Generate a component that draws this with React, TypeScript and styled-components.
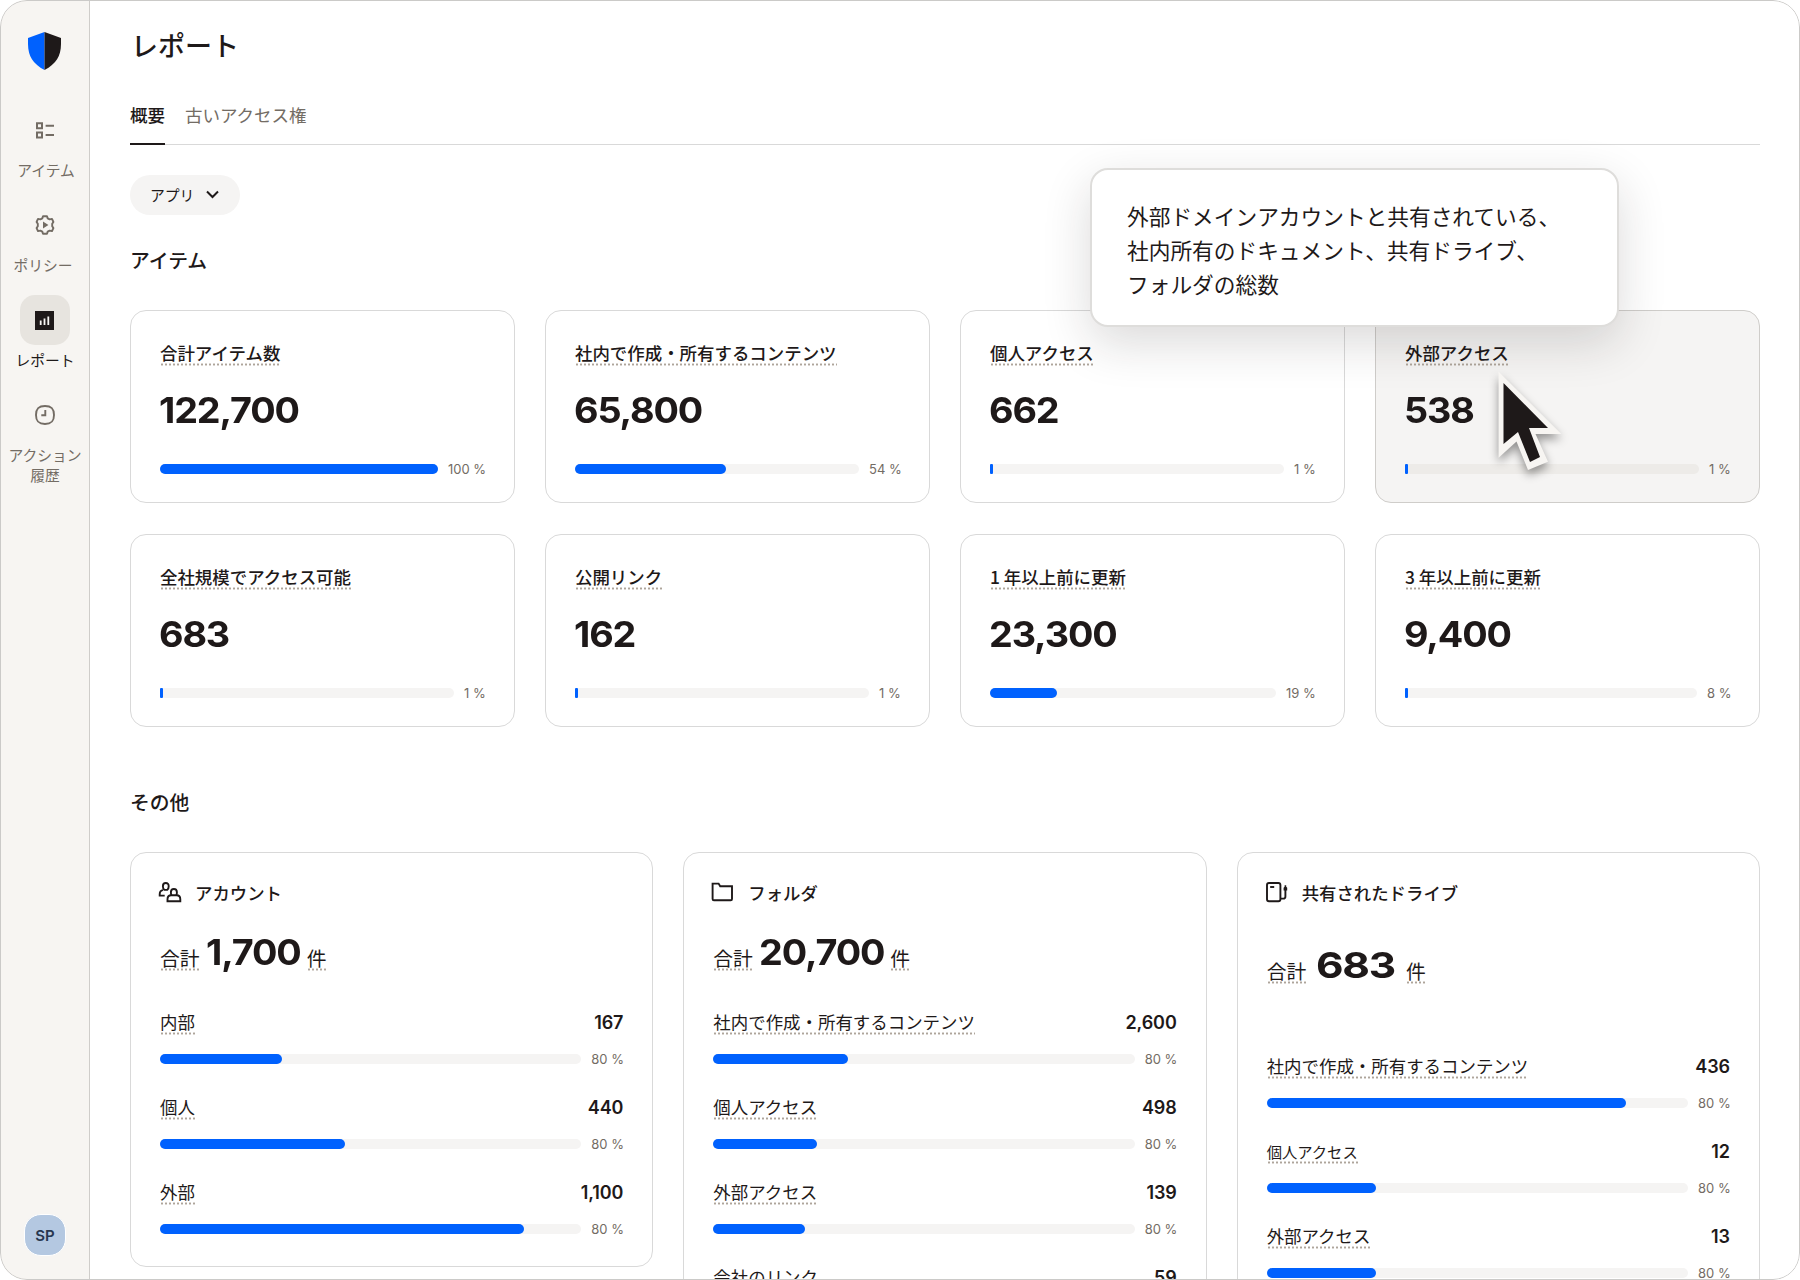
import React from 'react';
import styled, { createGlobalStyle, css } from 'styled-components';

const ink = '#1e1919';
const muted = '#736c64';
const blue = '#0061fe';
const line = '#d9d9d9';

const Global = createGlobalStyle`
  * { box-sizing: border-box; }
  html, body { margin: 0; background: #fff; }
  body {
    font-family: "Noto Sans CJK JP", sans-serif;
    color: ${ink};
    overflow: hidden;
  }
`;

const Frame = styled.div`
  width: 1800px;
  height: 1280px;
  display: flex;
  border-radius: 27px;
  overflow: hidden;
  background: #fff;
  position: relative;
  &::after {
    content: '';
    position: absolute;
    inset: 0;
    border: 1px solid #cbcac8;
    border-radius: 27px;
    pointer-events: none;
  }
`;

const Sidebar = styled.nav`
  width: 90px;
  flex: none;
  background: #f7f5f2;
  border-right: 1px solid #cfcdca;
  display: flex;
  flex-direction: column;
  align-items: center;
  padding: 32px 0 24px 1px;
`;

const Logo = styled.svg`
  width: 33px;
  height: 38px;
  margin: 0 1px 35px 0;
  flex: none;
`;

const NavItem = styled.a<{ $active?: boolean }>`
  height: 95px;
  flex: none;
  display: flex;
  flex-direction: column;
  align-items: center;
  color: ${p => (p.$active ? ink : muted)};
`;

const NavIcon = styled.span<{ $active?: boolean }>`
  width: 50px;
  height: 50px;
  border-radius: 15px;
  display: flex;
  align-items: center;
  justify-content: center;
  background: ${p => (p.$active ? '#e7e4df' : 'transparent')};
`;

const NavLabel = styled.span<{ $shift?: number }>`
  font-size: 14.8px;
  line-height: 20px;
  margin-top: 4.5px;
  text-align: center;
  white-space: pre;
  padding-left: ${p => Math.max(0, p.$shift ?? 0)}px;
  padding-right: ${p => Math.max(0, -(p.$shift ?? 0))}px;
`;

const Avatar = styled.div`
  margin-top: auto;
  width: 42px;
  height: 42px;
  border: 1px solid #fff;
  border-radius: 17px;
  background: #b4c8e1;
  color: #283750;
  display: flex;
  align-items: center;
  justify-content: center;
  font: 600 15px Inter, sans-serif;
`;

const Main = styled.main`
  flex: 1;
  padding: 0 40px;
  overflow: hidden;
  position: relative;
`;

const Title = styled.h1`
  margin: 0;
  padding: 25px 0 0 1px;
  font-size: 27px;
  line-height: 40px;
  font-weight: 500;
  height: 94px;
`;

const Tabs = styled.div`
  display: flex;
  gap: 20px;
  height: 51px;
  border-bottom: 1px solid ${line};
`;

const Tab = styled.span<{ $active?: boolean }>`
  font-size: 17.5px;
  line-height: 42px;
  height: 51px;
  color: ${p => (p.$active ? ink : muted)};
  font-weight: ${p => (p.$active ? 500 : 400)};
  ${p => p.$active && css`border-bottom: 2.5px solid ${ink};`}
`;

const Pill = styled.button`
  margin: 30px 0 0;
  width: 110px;
  height: 40px;
  border: 0;
  border-radius: 20px;
  background: #f5f4f3;
  color: ${ink};
  display: flex;
  align-items: center;
  padding: 0 21px 1px 20px;
  justify-content: space-between;
  font: 400 14.8px "Noto Sans CJK JP", sans-serif;
`;

const Heading = styled.h2<{ $top: number; $bottom: number }>`
  margin: ${p => p.$top}px 0 ${p => p.$bottom}px;
  font-size: 19.8px;
  line-height: 30px;
  font-weight: 500;
`;

const StatGrid = styled.div`
  display: grid;
  grid-template-columns: repeat(4, 385px);
  gap: 31px 30px;
`;

const Card = styled.section<{ $hover?: boolean }>`
  border: 1px solid ${p => (p.$hover ? '#cfcdca' : line)};
  border-radius: 16px;
  background: ${p => (p.$hover ? '#f5f4f3' : '#fff')};
  padding: 0 29px;
`;

const StatCard = styled(Card)`
  height: 193px;
  padding-top: 28px;
`;

const dotted = css`
  background-image: radial-gradient(circle, #aea59b 0.9px, transparent 1.3px);
  background-size: 4px 3px;
  background-repeat: repeat-x;
  background-position: 0 100%;
`;

const Term = styled.span<{ $size?: number; $weight?: number }>`
  display: inline-block;
  height: 27px;
  font-size: ${p => p.$size ?? 17.45}px;
  font-weight: ${p => p.$weight ?? 400};
  line-height: 28px;
  white-space: pre;
  ${dotted}
`;

const TotalTerm = styled(Term)`
  margin-bottom: 3px;
`;

const Big = styled.div<{ $stretch?: number }>`
  font: 650 36px/44px Inter, sans-serif;
  letter-spacing: -1.1px;
  transform: scaleX(${p => p.$stretch ?? 1.05});
  transform-origin: 0 50%;
`;

const StatValue = styled(Big)`
  margin: 22px 0 0 -1px;
`;

const Meter = styled.div`
  display: flex;
  align-items: center;
  gap: 10px;
  height: 20px;
`;

const StatMeter = styled(Meter)`
  margin-top: 27px;
`;

const Track = styled.div<{ $hover?: boolean }>`
  flex: 1;
  height: 10px;
  border-radius: 5px;
  background: ${p => (p.$hover ? '#edebe8' : '#f5f4f3')};
`;

const Fill = styled.div`
  height: 100%;
  background: ${blue};
  border-radius: 5px;
`;

const Percent = styled.span<{ $w: number }>`
  width: ${p => p.$w}px;
  font: 400 13px/18px Inter, sans-serif;
  color: ${muted};
  white-space: pre;
  text-align: right;
  padding: 0 1px 1px 0;
  flex: none;
`;

const OtherGrid = styled.div`
  display: grid;
  grid-template-columns: repeat(3, 1fr);
  gap: 30px;
  align-items: start;
`;

const OtherCard = styled(Card)<{ $h: number }>`
  height: ${p => p.$h}px;
  padding-top: 26px;
`;

const CardHead = styled.div`
  display: flex;
  align-items: center;
  height: 30px;
  font-size: 17.4px;
  line-height: 28px;
  padding-bottom: 2px;
  font-weight: 500;
`;

const HeadIcon = styled.svg`
  width: 24px;
  height: 24px;
  margin: -2px 13px 0 -2px;
  fill: none;
  stroke: ${ink};
  stroke-width: 1.9;
`;

const Total = styled.div<{ $top: number; $gap: number }>`
  display: flex;
  align-items: flex-end;
  gap: ${p => p.$gap}px;
  height: 44px;
  margin-top: ${p => p.$top}px;
`;

const TotalValue = styled(Big)<{ $extra: number }>`
  margin-right: ${p => p.$extra}px;
  margin-left: -1px;
`;

const Rows = styled.div<{ $top: number }>`
  margin-top: ${p => p.$top}px;
`;

const Row = styled.div`
  height: 85px;
`;

const RowHead = styled.div`
  display: flex;
  justify-content: space-between;
  height: 27px;
`;

const RowValue = styled.span`
  font: 600 18px/30px Inter, sans-serif;
  letter-spacing: -0.1px;
`;

const RowMeter = styled(Meter)`
  margin-top: 14px;
`;

const Tooltip = styled.div`
  position: absolute;
  left: 1000px;
  top: 168px;
  width: 529px;
  height: 159px;
  padding: 29px 35px;
  border: 2px solid #dedddb;
  border-radius: 18px;
  background: #fff;
  box-shadow: 0 16px 48px rgba(30, 25, 25, 0.16);
  font-size: 21.7px;
  line-height: 34px;
  white-space: pre;
`;

const Cursor = styled.svg`
  position: absolute;
  left: 1400px;
  top: 362px;
  width: 85px;
  height: 125px;
  overflow: visible;
  filter: drop-shadow(0 5px 5px rgba(0, 0, 0, 0.4));
`;

type Stat = { label: string; value: string; pct: string; w: number; fill: number; hover?: boolean };

const stats: Stat[] = [
  { label: '合計アイテム数', value: '122,700', pct: '100 %', w: 37, fill: 278 },
  { label: '社内で作成・所有するコンテンツ', value: '65,800', pct: '54 %', w: 31, fill: 151 },
  { label: '個人アクセス', value: '662', pct: '1 %', w: 21, fill: 3 },
  { label: '外部アクセス', value: '538', pct: '1 %', w: 21, fill: 3, hover: true },
  { label: '全社規模でアクセス可能', value: '683', pct: '1 %', w: 21, fill: 3 },
  { label: '公開リンク', value: '162', pct: '1 %', w: 21, fill: 3 },
  { label: '1 年以上前に更新', value: '23,300', pct: '19 %', w: 29, fill: 67 },
  { label: '3 年以上前に更新', value: '9,400', pct: '8 %', w: 23, fill: 3 },
];

type RowData = { label: string; value: string; fill: number; size?: number };

const PeopleIcon = () => (
  <HeadIcon viewBox="0 0 24 24">
    <path d="M6.7 15.6H1.7V14.2Q1.7 10.4 5 10.1" />
    <path d="M9.3 9.9H6.3Q4.9 8.6 4.9 6.2Q4.9 3 7.8 3T10.7 6.2Q10.7 8.6 9.3 9.9Z" />
    <path d="M13.4 15.2Q12.9 14 12.9 12.3Q12.9 9 15.9 9T18.9 12.3Q18.9 14 18.4 15.2" />
    <path d="M9.5 21.2V19.2Q9.5 15.3 13.2 15.3H18.6Q22.3 15.3 22.3 19.2V21.2Z" />
  </HeadIcon>
);

const FolderIcon = () => (
  <HeadIcon viewBox="0 0 24 24">
    <path d="M1.6 3.6H7.6L9.2 6.2H21V19Q21 20.3 19.7 20.3H2.9Q1.6 20.3 1.6 19Z" />
  </HeadIcon>
);

const DriveIcon = () => (
  <HeadIcon viewBox="0 0 24 24">
    <rect x="2" y="3" width="13.4" height="18.2" rx="2" />
    <path d="M5.2 7H9.2" />
    <path d="M15.4 18.6H18.2Q20.4 18.6 20.4 16.4V9" />
    <path d="M18.6 10.5V7.8L19.6 6.8V5.2H21.2V6.8L22.2 7.8V10.5Z" fill={ink} stroke="none" />
  </HeadIcon>
);

const others: {
  title: string;
  icon: React.ReactNode;
  total: string;
  h: number;
  gap: number;
  extra: number;
  totalTop: number;
  rowsTop: number;
  stretch?: number;
  rows: RowData[];
}[] = [
  {
    title: 'アカウント', icon: <PeopleIcon />, total: '1,700', h: 415, gap: 7, extra: 4, totalTop: 21, rowsTop: 34,
    rows: [
      { label: '内部', value: '167', fill: 121.5 },
      { label: '個人', value: '440', fill: 185 },
      { label: '外部', value: '1,100', fill: 364 },
    ],
  },
  {
    title: 'フォルダ', icon: <FolderIcon />, total: '20,700', h: 480, gap: 7, extra: 5, totalTop: 21, rowsTop: 34,
    rows: [
      { label: '社内で作成・所有するコンテンツ', value: '2,600', fill: 135 },
      { label: '個人アクセス', value: '498', fill: 104 },
      { label: '外部アクセス', value: '139', fill: 92 },
      { label: '会社のリンク', value: '59', fill: 70 },
    ],
  },
  {
    title: '共有されたドライブ', icon: <DriveIcon />, total: '683', h: 480, gap: 11, extra: 12, totalTop: 34, rowsTop: 65, stretch: 1.18,
    rows: [
      { label: '社内で作成・所有するコンテンツ', value: '436', fill: 359 },
      { label: '個人アクセス', value: '12', fill: 109, size: 15.3 },
      { label: '外部アクセス', value: '13', fill: 109 },
    ],
  },
];

export default function App() {
  return (
    <>
      <Global />
      <Frame>
        <Sidebar>
          <Logo viewBox="0 0 33 38">
            <path d="M16.5 0L0 6V12C0 24 5 32 16.5 38Z" fill={blue} />
            <path d="M16.5 0L33 6V12C33 24 28 32 16.5 38Z" fill={ink} />
          </Logo>
          <NavItem>
            <NavIcon>
              <svg width="18" height="17" viewBox="0 0 18 17" fill="none" stroke={muted} strokeWidth="2">
                <path d="M1 1.2H6V6.2H1ZM1 10.4H6V15.4H1ZM9.6 3.8H18M9.6 13H18" />
              </svg>
            </NavIcon>
            <NavLabel $shift={2}>アイテム</NavLabel>
          </NavItem>
          <NavItem>
            <NavIcon>
              <svg width="20" height="20" viewBox="0 0 20 20" fill="none" stroke={muted} strokeWidth="1.9" strokeLinejoin="round">
                <path d="M8 1.2H12L12.7 3.4L14.6 4.4L17 3.9L18.4 7L17.2 8.8V11.2L18.4 13L17 16.1L14.6 15.6L12.7 16.6L12 18.8H8L7.3 16.6L5.4 15.6L3 16.1L1.6 13L2.8 11.2V8.8L1.6 7L3 3.9L5.4 4.4L7.3 3.4Z" />
                <path d="M8 6.5V13.5L13.4 10Z" fill={muted} stroke="none" />
              </svg>
            </NavIcon>
            <NavLabel $shift={-4}>ポリシー</NavLabel>
          </NavItem>
          <NavItem $active>
            <NavIcon $active>
              <svg width="19" height="19" viewBox="0 0 19 19">
                <path d="M0 0H19V19H0Z" fill={ink} />
                <path d="M5.7 9.5V14M9.5 7.5V14M13.3 5.5V14" stroke="#f7f5f2" strokeWidth="1.8" />
              </svg>
            </NavIcon>
            <NavLabel>レポート</NavLabel>
          </NavItem>
          <NavItem>
            <NavIcon>
              <svg width="20" height="20" viewBox="0 0 20 20" fill="none" stroke={muted} strokeWidth="1.9">
                <path d="M10 1C16.5 1 19 3.5 19 10S16.5 19 10 19S1 16.5 1 10S3.5 1 10 1Z" />
                <path d="M10.3 5V10.3H6.3" />
              </svg>
            </NavIcon>
            <NavLabel>{'アクション\n履歴'}</NavLabel>
          </NavItem>
          <Avatar>SP</Avatar>
        </Sidebar>
        <Main>
          <Title>レポート</Title>
          <Tabs>
            <Tab $active>概要</Tab>
            <Tab>古いアクセス権</Tab>
          </Tabs>
          <Pill>
            アプリ
            <svg width="13" height="9" viewBox="0 0 13 9" fill="none" stroke={ink} strokeWidth="2">
              <path d="M1 1.5L6.5 7L12 1.5" />
            </svg>
          </Pill>
          <Heading $top={30} $bottom={35}>アイテム</Heading>
          <StatGrid>
            {stats.map(s => (
              <StatCard key={s.label} $hover={s.hover}>
                <Term $weight={500}>{s.label}</Term>
                <StatValue>{s.value}</StatValue>
                <StatMeter>
                  <Track $hover={s.hover}><Fill style={{ width: s.fill, borderRadius: s.fill < 10 ? 1 : 5 }} /></Track>
                  <Percent $w={s.w}>{s.pct}</Percent>
                </StatMeter>
              </StatCard>
            ))}
          </StatGrid>
          <Heading $top={60} $bottom={35}>その他</Heading>
          <OtherGrid>
            {others.map(o => (
              <OtherCard key={o.title} $h={o.h}>
                <CardHead>{o.icon}{o.title}</CardHead>
                <Total $top={o.totalTop} $gap={o.gap}>
                  <TotalTerm $size={19.8}>合計</TotalTerm>
                  <TotalValue $stretch={o.stretch} $extra={o.extra}>{o.total}</TotalValue>
                  <TotalTerm $size={19.8}>件</TotalTerm>
                </Total>
                <Rows $top={o.rowsTop}>
                  {o.rows.map(r => (
                    <Row key={r.label}>
                      <RowHead>
                        <Term $size={r.size}>{r.label}</Term>
                        <RowValue>{r.value}</RowValue>
                      </RowHead>
                      <RowMeter>
                        <Track><Fill style={{ width: r.fill }} /></Track>
                        <Percent $w={32}>80 %</Percent>
                      </RowMeter>
                    </Row>
                  ))}
                </Rows>
              </OtherCard>
            ))}
          </OtherGrid>
          <Tooltip>{'外部ドメインアカウントと共有されている、\n社内所有のドキュメント、共有ドライブ、\nフォルダの総数'}</Tooltip>
          <Cursor viewBox="1490 362 85 125">
            <path d="M1498.6 371.7L1561.3 434L1535.5 434L1548 461.7L1528 470L1516.5 441.5L1498.6 457.7Z" fill="#f7f5f2" />
            <path d="M1503.5 383L1548 428H1529L1540 457L1530 462L1518 432L1503.5 444Z" fill={ink} />
          </Cursor>
        </Main>
      </Frame>
    </>
  );
}
